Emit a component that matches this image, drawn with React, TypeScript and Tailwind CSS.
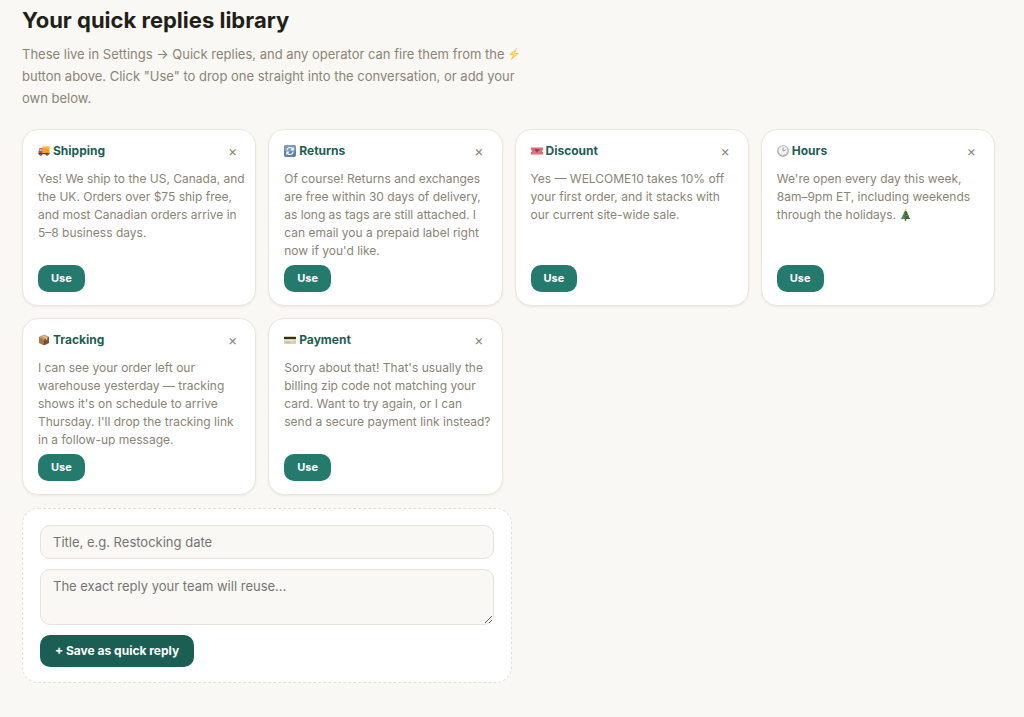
import type { ReactNode } from "react";

type Reply = {
  title: string;
  icon: ReactNode;
  body: ReactNode;
};

function TruckIcon() {
  return (
    <svg viewBox="0 0 24 20" className="w-3 h-2.5 shrink-0" aria-hidden="true">
      <path d="M9 1h13a1 1 0 0 1 1 1v12H9z" fill="#f2a529" />
      <path d="M9 1h13a1 1 0 0 1 1 1v2H9z" fill="#f8c45c" />
      <path d="M3.5 4H9v12H1v-6z" fill="#e0452f" />
      <path d="M4.3 5.5H7.5V10H2.5z" fill="#a9c9d8" />
      <path d="M1 14h22v2.5H1z" fill="#8d3324" />
      <circle cx="5.5" cy="16.5" r="2.8" fill="#3b3b40" />
      <circle cx="18" cy="16.5" r="2.8" fill="#3b3b40" />
      <circle cx="5.5" cy="16.5" r="1" fill="#b9b9bd" />
      <circle cx="18" cy="16.5" r="1" fill="#b9b9bd" />
    </svg>
  );
}

function ReturnsIcon() {
  return (
    <svg viewBox="0 0 24 24" className="size-3 shrink-0" aria-hidden="true">
      <rect x="0" y="0" width="24" height="24" rx="4" fill="#5f82a8" />
      <rect x="0" y="0" width="24" height="12" rx="4" fill="#7d9bbd" />
      <path d="M5.5 11a6.8 6.8 0 0 1 11.5-4" fill="none" stroke="#fff" strokeWidth="2.4" />
      <path d="M19.5 4v7h-7z" fill="#fff" />
      <path d="M18.5 13a6.8 6.8 0 0 1-11.5 4" fill="none" stroke="#fff" strokeWidth="2.4" />
      <path d="M4.5 20v-7h7z" fill="#fff" />
    </svg>
  );
}

function TicketIcon() {
  return (
    <svg viewBox="0 0 24 16" className="w-3 h-2 shrink-0" aria-hidden="true">
      <path d="M0 1h24v5a2 2 0 0 0 0 4v5H0v-5a2 2 0 0 0 0-4z" fill="#ee6471" />
      <path d="M5 3h14v10H5z" fill="#e4737d" />
      <path d="M7 4h10v3.5h-2.5L12 12 9.5 7.5H7z" fill="#7b4a52" />
    </svg>
  );
}

function ClockIcon() {
  return (
    <svg viewBox="0 0 24 24" className="size-3 shrink-0" aria-hidden="true">
      <circle cx="12" cy="12" r="11.5" fill="#98989a" />
      <circle cx="12" cy="11.5" r="9.8" fill="#d4d4d5" />
      <circle cx="12" cy="11" r="8.5" fill="#f3f3f3" />
      <path d="M12 5v7l5-2" fill="none" stroke="#777" strokeWidth="1.5" />
    </svg>
  );
}

function PackageIcon() {
  return (
    <svg viewBox="0 0 24 24" className="size-3 shrink-0" aria-hidden="true">
      <path d="M12 1l10 4.5L12 11 2 5.5z" fill="#c99a6b" />
      <path d="M2 5.5L12 11v12L2 18z" fill="#a87444" />
      <path d="M22 5.5L12 11v12l10-5z" fill="#7d5130" />
      <path d="M6 3.7l10 5v4l2.5-1.3V7.2L9 2.4z" fill="#e3c7a2" />
    </svg>
  );
}

function CardIcon() {
  return (
    <svg viewBox="0 0 24 16" className="w-3 h-2 shrink-0" aria-hidden="true">
      <rect x="0" y="0" width="24" height="16" rx="1.5" fill="#d9d3ae" />
      <path d="M0 2h24v4H0z" fill="#2f2f2c" />
      <path d="M2 8h16v2.5H2z" fill="#ece8cf" />
      <path d="M3 12.5h10" stroke="#a09b7d" strokeWidth="1.2" />
    </svg>
  );
}

function TreeIcon() {
  return (
    <svg viewBox="0 0 22 24" className="inline-block w-[11px] h-3 align-[-2px]" role="img" aria-label="Christmas tree">
      <path d="M9.5 19h3v4.5h-3z" fill="#7b4a2b" />
      <path d="M11 2l4.5 7H14l4 5.5h-1.5L20.5 20h-19l4-5.5H4L8 9H6.500z" fill="#3b8a48" />
      <path d="M11 2l4.5 7H14l4 5.5h-1.5L20.5 20H11z" fill="#2a6b37" />
      <circle cx="11" cy="2.3" r="1.8" fill="#f2c230" />
      <circle cx="9" cy="10" r="1.1" fill="#e0452f" />
      <circle cx="14" cy="13" r="1.1" fill="#f2c230" />
      <circle cx="7.5" cy="16.5" r="1.1" fill="#6aa7e0" />
      <circle cx="14.5" cy="17.5" r="1.1" fill="#e0452f" />
    </svg>
  );
}

function BoltIcon() {
  return (
    <svg viewBox="0 0 24 28" className="inline-block w-3 h-3.5 align-[-2px]" role="img" aria-label="lightning">
      <path d="M19 1L2 16h8L5 27l17-15h-8z" fill="#fbc04a" />
      <path d="M17 4L6 14.5h6L9 21l9-7.5h-6z" fill="#ffe08a" />
    </svg>
  );
}

const replies: Reply[] = [
  {
    title: "Shipping",
    icon: <TruckIcon />,
    body: "Yes! We ship to the US, Canada, and the UK. Orders over $75 ship free, and most Canadian orders arrive in 5–8 business days.",
  },
  {
    title: "Returns",
    icon: <ReturnsIcon />,
    body: "Of course! Returns and exchanges are free within 30 days of delivery, as long as tags are still attached. I can email you a prepaid label right now if you'd like.",
  },
  {
    title: "Discount",
    icon: <TicketIcon />,
    body: "Yes — WELCOME10 takes 10% off your first order, and it stacks with our current site-wide sale.",
  },
  {
    title: "Hours",
    icon: <ClockIcon />,
    body: (
      <>
        We're open every day this week, 8am–9pm ET, including weekends through the holidays. <TreeIcon />
      </>
    ),
  },
  {
    title: "Tracking",
    icon: <PackageIcon />,
    body: "I can see your order left our warehouse yesterday — tracking shows it's on schedule to arrive Thursday. I'll drop the tracking link in a follow-up message.",
  },
  {
    title: "Payment",
    icon: <CardIcon />,
    body: "Sorry about that! That's usually the billing zip code not matching your card. Want to try again, or I can send a secure payment link instead?",
  },
];

function ReplyCard({ title, icon, body }: Reply) {
  return (
    <article className="flex flex-col rounded-2xl border border-[#ece7de] bg-white pt-3 pr-[9px] pb-[13px] pl-[15px] shadow-[0_1px_2px_rgba(60,50,30,0.08)]">
      <div className="flex items-start justify-between">
        <h3 className="flex items-center gap-[3px] text-xs leading-[18px] font-bold text-[#1b5f54]">
          {icon}
          {title}
        </h3>
        <button type="button" aria-label={`Delete ${title}`} className="px-[9px] text-sm leading-[18px] text-[#8a8475]">
          ×
        </button>
      </div>
      <p className="mt-2.5 mb-[5px] text-xs leading-[18px] text-[#8a8475]">{body}</p>
      <button type="button" className="mt-auto self-start rounded-[10px] bg-[#237a6d] px-[13px] py-1 text-[11px] leading-[19px] font-bold text-white">
        Use
      </button>
    </article>
  );
}

export default function App() {
  return (
    <main className="min-h-screen bg-[#faf8f4] pt-1.5 pr-[29px] pb-8 pl-[22px] font-['Inter',sans-serif] antialiased">
      <h2 className="text-[22px] leading-7 font-bold text-[#211f1a]">Your quick replies library</h2>
      <p className="mt-[9px] max-w-[520px] text-[13px] leading-[22px] text-[#8a8475]">
        These live in Settings → Quick replies, and any operator can fire them from the <BoltIcon /> button above. Click "Use" to drop one straight into the conversation, or add your own below.
      </p>

      <div className="mt-5 grid grid-cols-2 gap-3 md:grid-cols-4">
        {replies.map((r) => (
          <ReplyCard key={r.title} {...r} />
        ))}
      </div>

      <form className="mt-[13px] flex max-w-[490px] flex-col gap-2.5 rounded-2xl border border-dashed border-[#e6e0d5] bg-white px-[17px] pt-4 pb-[15px]" onSubmit={(e) => e.preventDefault()}>
        <input
          type="text"
          aria-label="Quick reply title"
          placeholder="Title, e.g. Restocking date"
          className="rounded-[10px] border border-[#e8e2d8] bg-[#faf8f4] px-3 py-1.5 text-[13px] leading-5 placeholder:text-[#757575]"
        />
        <textarea
          aria-label="Quick reply text"
          rows={2}
          placeholder="The exact reply your team will reuse..."
          className="h-14 resize-y rounded-[10px] border border-[#e8e2d8] bg-[#faf8f4] px-3 py-1.5 text-[13px] leading-5 placeholder:text-[#757575]"
        />
        <button type="submit" className="self-start rounded-[10px] bg-[#1b5f54] px-[15px] py-1.5 text-xs leading-5 font-bold text-white">
          + Save as quick reply
        </button>
      </form>
    </main>
  );
}
